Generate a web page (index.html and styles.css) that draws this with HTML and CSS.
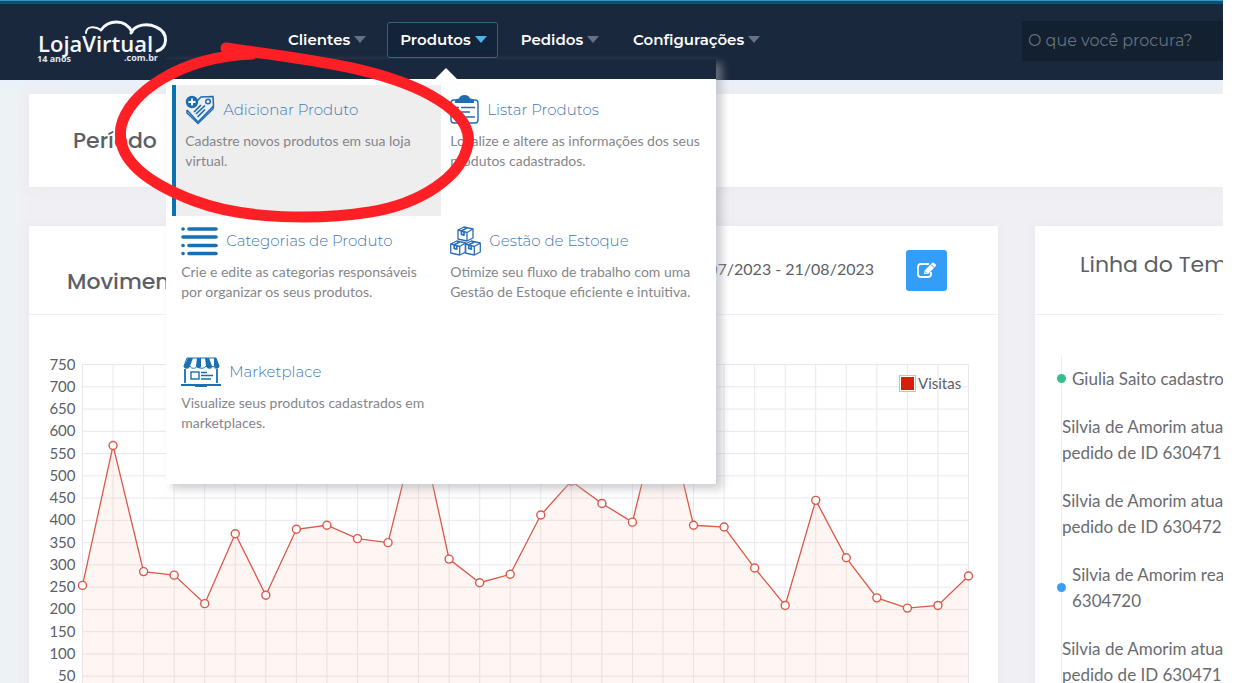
FILE: index.html
```html
<!DOCTYPE html>
<html lang="pt-BR">
<head>
<meta charset="utf-8">
<title>LojaVirtual - Painel</title>
<link rel="stylesheet" href="styles.css">
</head>
<body>
<div class="app">
  <header class="topbar">
    <a class="logo" href="#" aria-label="LojaVirtual">
      <svg class="logo-art" viewBox="0 0 136 50" width="136" height="50">
        <g fill="none" stroke="#f4f8ff" stroke-linecap="round">
          <path d="M50 17 C50 11 58 9 65 14" stroke-width="2"/>
          <path d="M65 14 C72 4 89 2 96 16" stroke-width="3"/>
          <path d="M95 17 C99 8 112 7 120 11 C134 17 131 33 121 35" stroke-width="3"/>
        </g>
        <text class="logo-name" x="2" y="36">LojaVirtual</text>
        <text class="logo-small" x="1" y="46">14 anos</text>
        <text class="logo-small" x="88" y="45">.com.br</text>
      </svg>
    </a>
    <nav class="nav">
      <div class="nav-item"><button class="nav-button" type="button">Clientes<span class="caret"></span></button></div>
      <div class="nav-item">
        <button class="nav-button nav-button-open" type="button" aria-expanded="true">Produtos<span class="caret"></span></button>
        <div class="mega">
          <div class="mega-panel">
            <a class="entry entry-active" href="#">
              <span class="entry-head">
                <svg width="30" height="30" viewBox="0 0 30 30" fill="none" stroke="#1d6db5" stroke-width="1.5">
                  <path d="M11 7 L16 2 L28 1.500 L28.500 11 L13 27 L2 15"/>
                  <path d="M2 15 L2 18 L13 28.500 L28 14 L28.500 11"/>
                  <circle cx="23" cy="6.500" r="2.300"/>
                  <path d="M9 17 L16 10 M11 19 L20 10.500 M12.500 22 L20 14.500" stroke-width="1.700"/>
                  <circle cx="7" cy="7" r="6.200" fill="#1d6db5" stroke="none"/>
                  <path d="M7 3.500 V10.500 M3.500 7 H10.500" stroke="#fff" stroke-width="1.800"/>
                </svg>
                <span class="entry-title">Adicionar Produto</span>
              </span>
              <span class="entry-text">Cadastre novos produtos em sua loja virtual.</span>
            </a>
            <a class="entry" href="#">
              <span class="entry-head">
                <svg width="29" height="30" viewBox="0 0 29 30" fill="none" stroke="#1d6db5" stroke-width="1.400">
                  <rect x="1" y="5" width="27" height="23" rx="3"/>
                  <path d="M5 8 V6 Q5 4 9 3.500 Q10 0 14.500 0 Q19 0 20 3.500 Q24 4 24 6 V8 Z" fill="#1d6db5" stroke="none"/>
                  <path d="M6 12.500 h3 M11 12.500 h14 M6 17 h3 M11 17 h9 M6 22 h3 M11 22 h14"/>
                </svg>
                <span class="entry-title">Listar Produtos</span>
              </span>
              <span class="entry-text">Localize e altere as informações dos seus produtos cadastrados.</span>
            </a>
            <a class="entry" href="#">
              <span class="entry-head">
                <svg width="37" height="30" viewBox="0 0 37 30" stroke="#1a6fb0" stroke-width="3.600" stroke-linecap="round">
                  <path d="M2 3 h.1 M8 3 h27 M2 11 h33 M2 19.500 h.1 M8 19.500 h27 M2 27.500 h.1 M8 27.500 h27"/>
                </svg>
                <span class="entry-title">Categorias de Produto</span>
              </span>
              <span class="entry-text">Crie e edite as categorias responsáveis por organizar os seus produtos.</span>
            </a>
            <a class="entry" href="#">
              <span class="entry-head">
                <svg width="31" height="30" viewBox="0 0 31 30" fill="none" stroke="#2a6fb8" stroke-width="1.300" stroke-linejoin="round">
                  <g id="crate">
                    <path d="M8 4 L14 1 L23 3 V12 L17 15 L8 13 Z M8 4 L17 6.500 V15 M17 6.500 L23 3"/>
                    <path d="M11 5 L17 2 M11.500 5 v3.500 l2.500 .6 v-3.500" stroke-width="1.700"/>
                  </g>
                  <use href="#crate" x="-7.300" y="14"/>
                  <use href="#crate" x="7.300" y="14"/>
                </svg>
                <span class="entry-title">Gestão de Estoque</span>
              </span>
              <span class="entry-text">Otimize seu fluxo de trabalho com uma Gestão de Estoque eficiente e intuitiva.</span>
            </a>
            <a class="entry" href="#">
              <span class="entry-head">
                <svg width="40" height="30" viewBox="0 0 40 30" fill="none" stroke="#1a6fb0">
                  <path d="M6 1 H35 L38 9 C38 12 33 12 32 9 C31 12 26 12 25 9 C24 12 17 12 16 9 C15 12 10 12 9 9 C8 12 3 12 3 9 Z" fill="#fff" stroke-width="1"/>
                  <path d="M7 1 h5 l-3 8 c-1 3 -6 3 -6 0 Z M16 1 h4 v9 c-1 2 -5 1 -5 -1 Z M24 1 h4 l3 8 c0 3 -5 3 -6 0 Z M33 1 h2 l3 8 c0 3 -4 3 -5 0 Z" fill="#1a6fb0" stroke="none"/>
                  <path d="M4 12 V26 M36 12 V26" stroke-width="1.800"/>
                  <rect x="10" y="15" width="8" height="7" stroke-width="1.400"/>
                  <path d="M20 15.500 h6 M20 18.500 h12 M20 22 h10" stroke-width="1.500"/>
                  <path d="M0 27 H40 V29 H26 V30 H14 V29 H0 Z" fill="#1a6fb0" stroke="none"/>
                </svg>
                <span class="entry-title">Marketplace</span>
              </span>
              <span class="entry-text">Visualize seus produtos cadastrados em marketplaces.</span>
            </a>
          </div>
        </div>
      </div>
      <div class="nav-item"><button class="nav-button" type="button">Pedidos<span class="caret"></span></button></div>
      <div class="nav-item"><button class="nav-button" type="button">Configurações<span class="caret"></span></button></div>
    </nav>
    <input class="search" type="search" placeholder="O que você procura?" aria-label="O que você procura?">
  </header>

  <main class="content">
    <section class="card period"><h2 class="heading">Período</h2></section>
    <div class="columns">
      <section class="card">
        <div class="card-head">
          <h2 class="heading">Movimento</h2>
          <span class="dates">22/07/2023 - 21/08/2023</span>
          <button class="edit" type="button" aria-label="Editar período">
            <svg width="20" height="17" viewBox="0 0 20 17" fill="none" stroke="#fff">
              <path d="M12 2 H4 Q1 2 1 5 V12 Q1 15 4 15 H11 Q14 15 14 12 V10" stroke-width="1.800"/>
              <path d="M7 12 L7.500 8.500 L15 1 Q16 0 17.500 1.300 L18.500 2.300 Q19.700 3.500 18.500 4.500 L11 12 Z" fill="#fff" stroke="none"/>
              <path d="M14 2.500 L17.500 6 M8 9.500 L9.800 11.300" stroke="#339df7" stroke-width="1"/>
            </svg>
          </button>
        </div>
        <svg class="chart" id="chart" viewBox="0 0 969 400" role="img" aria-label="Visitas por dia"></svg>
      </section>
      <section class="card side">
        <div class="card-head side-head"><h2 class="heading">Linha do Tempo</h2></div>
        <ul class="timeline">
          <li class="event event-green">Giulia Saito cadastrou</li>
          <li class="event">Silvia de Amorim atualizou<br>pedido de ID 630471</li>
          <li class="event">Silvia de Amorim atualizou<br>pedido de ID 630472</li>
          <li class="event event-blue">Silvia de Amorim realizou<br>6304720</li>
          <li class="event">Silvia de Amorim atualizou<br>pedido de ID 630471</li>
        </ul>
      </section>
    </div>
  </main>

  <svg class="marker" width="380" height="190" viewBox="110 40 380 190" fill="none" stroke="#ff2026" stroke-linecap="round" aria-hidden="true">
    <path d="M226 48 C295 58 377 66 430 95 C457 110 471 127 468 144 C462 177 420 204 370 212 C320 220 245 220 195 201 C142 181 116 157 121 127 C128 93 180 57 252 54" stroke-width="11"/>
  </svg>
</div>
<script src="chart.js"></script>
</body>
</html>
```
FILE: styles.css
```css
* { box-sizing: border-box; }

body {
  margin: 0;
  background: #fff;
  color: #5c5f66;
  font-family: Lato, "Open Sans", sans-serif;
}

button, input { font: inherit; }
a { color: inherit; text-decoration: none; }

.app {
  position: relative;
  height: 100vh;
  margin-right: 12px;
  overflow: hidden;
  background: linear-gradient(90deg, #edf3f4 0, #edf3f4 14px, #f0f0f4 29px);
}

.topbar {
  position: relative;
  z-index: 2;
  display: flex;
  align-items: center;
  height: 80px;
  padding-left: 36px;
  border-top: 1px solid #3b93c4;
  background: #1a283e;
  box-shadow: inset 0 3px #0d5078, 0 6px 8px #e8f0fb;
}

.logo { display: block; width: 136px; height: 50px; }
.logo-art { display: block; }
.logo-name { font: 600 22px "Open Sans", sans-serif; fill: #f4f8ff; }
.logo-small { font: 700 9px "Open Sans", sans-serif; fill: #dfe6f0; }

.nav { display: flex; gap: 10px; margin: 0 0 2px 103px; }
.nav-item { position: relative; }

.nav-button {
  display: flex;
  align-items: center;
  gap: 4px;
  height: 36px;
  padding: 0 10px 0 12px;
  border: 1px solid transparent;
  border-radius: 3px;
  background: none;
  color: #fff;
  font: 600 15px Montserrat, Inter, sans-serif;
}
.nav-button-open { border-color: #2d6478; background: #13233a; }
.caret {
  border: 6px solid transparent;
  border-top: 7px solid #687085;
  border-bottom: 0;
}
.nav-button-open .caret { border-top-color: #4db4e4; }

.search {
  width: 201px;
  height: 40px;
  margin-left: auto;
  padding: 0 6px;
  border: 0;
  background: #122030;
  color: #fff;
  font: 400 16px Montserrat, Inter, sans-serif;
}
.search::placeholder { color: #66717f; opacity: 1; }

.mega {
  position: absolute;
  top: 36px;
  left: -221px;
  width: 550px;
  padding-top: 20px;
  border-top: 1px solid #243349;
  box-shadow: 6px 5px 8px rgba(165, 167, 175, 0.55);
}
.mega::before {
  content: "";
  position: absolute;
  top: 9px;
  left: 269px;
  border: 11px solid transparent;
  border-top: 0;
  border-bottom-color: #fff;
}
.mega-panel {
  display: grid;
  grid-template-columns: 1fr 1fr;
  grid-auto-rows: 131px;
  padding: 6px;
  background: #fff;
}

.entry { padding: 10px 9px; }
.entry-active { border-left: 4px solid #0b73ad; background: #eee; }
.entry-head { display: flex; align-items: center; gap: 8px; height: 30px; margin-bottom: 6px; }
.entry-title { color: #4279b5; font: 300 15px Montserrat, Inter, sans-serif; white-space: nowrap; }
.entry-text { display: block; color: #85868a; font-size: 14px; line-height: 20px; }

.content { padding: 14px 0 0 29px; }
.card { background: #fff; box-shadow: 0 0 12px rgba(225, 225, 235, 0.6); }
.period { display: flex; align-items: center; height: 93px; padding-left: 44px; }
.heading { margin: 0; font: 500 22px Poppins, Inter, sans-serif; white-space: nowrap; }

.columns {
  display: grid;
  grid-template-columns: minmax(0, 1fr) 188px;
  gap: 37px;
  margin-top: 39px;
}
.card-head {
  display: flex;
  align-items: center;
  height: 89px;
  padding: 0 51px 0 38px;
  border-bottom: 1px solid #efeff3;
}
.card-head .heading { padding-top: 22px; }
.dates { margin: 0 32px 4px auto; font-size: 16px; }
.edit {
  display: grid;
  place-items: center;
  width: 41px;
  height: 41px;
  padding: 0;
  border: 0;
  border-radius: 3px;
  background: #339df7;
}

.chart { display: block; width: 100%; }
.grid-line { fill: none; stroke: #e9e7ed; }
.area { fill: rgba(255, 170, 150, 0.12); }
.line { fill: none; stroke: #dc5848; stroke-width: 1.3; }
.point { fill: #fff; stroke: #dc5848; stroke-width: 1.4; }
.axis-label, .legend-label { fill: #5c5f66; font-size: 15px; }
.axis-label { text-anchor: end; }
.legend-frame { fill: #fff; stroke: #e5b5b0; }
.legend-swatch { fill: #d6200c; }

.side { overflow: hidden; }
.side-head { padding: 0 0 0 45px; }
.side-head .heading { padding: 0 0 12px; font-weight: 400; }
.timeline {
  display: grid;
  gap: 22px;
  margin: 40px 0 0 26px;
  padding: 11px 0;
  border-left: 1px solid #ededf1;
  list-style: none;
  font-size: 17px;
  line-height: 26px;
  white-space: nowrap;
}
.event { position: relative; color: #696b70; }
.event-green, .event-blue { padding-left: 10px; }
.event-green::before, .event-blue::before {
  content: "";
  position: absolute;
  top: 50%;
  left: -5px;
  width: 9px;
  height: 9px;
  margin-top: -5px;
  border-radius: 50%;
  background: #34bf8c;
}
.event-blue::before { background: #409df7; }

.marker { position: absolute; z-index: 3; top: 40px; left: 110px; pointer-events: none; }
```
FILE: chart.js
```js
(function () {
  const visits = [254, 568, 285, 277, 213, 370, 232, 380, 389, 359, 350, 625, 313, 260, 279,
    412, 488, 438, 396, 676, 389, 385, 293, 209, 445, 316, 226, 203, 209, 275];

  const area = { left: 53.5, right: 939.5, top: 49.5, bottom: 383.5 };
  const max = 750;
  const x = i => area.left + i * (area.right - area.left) / (visits.length - 1);
  const y = v => area.bottom - v * (area.bottom - area.top) / max;
  const svg = document.getElementById('chart');

  function add(name, attrs, text) {
    const el = document.createElementNS('http://www.w3.org/2000/svg', name);
    for (const key in attrs) el.setAttribute(key, attrs[key]);
    if (text) el.textContent = text;
    svg.appendChild(el);
  }

  for (let v = 0; v <= max; v += 50) {
    add('path', { class: 'grid-line', d: `M${area.left} ${y(v)}H${area.right}` });
    add('text', { class: 'axis-label', x: area.left - 7, y: y(v) + 5 }, String(v));
  }
  visits.forEach((v, i) => add('path', { class: 'grid-line', d: `M${x(i)} ${area.top}V${area.bottom}` }));

  const route = visits.map((v, i) => `${x(i)} ${y(v)}`).join('L');
  add('path', { class: 'area', d: `M${route}L${area.right} ${area.bottom}H${area.left}Z` });
  add('path', { class: 'line', d: `M${route}` });
  visits.forEach((v, i) => add('circle', { class: 'point', cx: x(i), cy: y(v), r: 4 }));

  add('rect', { class: 'legend-frame', x: 870.5, y: 60.5, width: 16, height: 16 });
  add('rect', { class: 'legend-swatch', x: 872, y: 62, width: 13, height: 13 });
  add('text', { class: 'legend-label', x: 889, y: 74 }, 'Visitas');
})();
```
